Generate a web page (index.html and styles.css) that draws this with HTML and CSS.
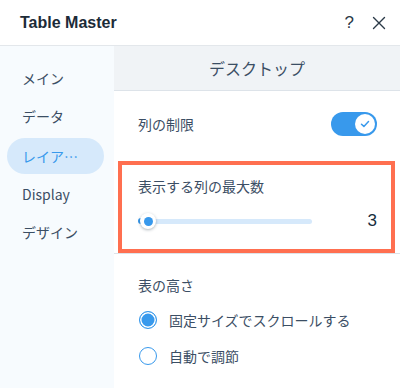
FILE: index.html
```html
<!DOCTYPE html>
<html lang="ja">
<head>
<meta charset="utf-8">
<title>Table Master</title>
<link rel="stylesheet" href="styles.css">
</head>
<body>
<div class="panel">
  <header class="header">
    <div class="title">Table Master</div>
    <div class="header-actions">
      <span class="help">?</span>
      <svg class="close" width="14" height="14" viewBox="0 0 14 14"><path d="M1.5 1.5 L12.5 12.5 M12.5 1.5 L1.5 12.5" stroke="#2b3a48" stroke-width="1.4" fill="none" stroke-linecap="round"/></svg>
    </div>
  </header>
  <div class="main">
    <nav class="sidebar">
      <div class="nav-item">メイン</div>
      <div class="nav-item">データ</div>
      <div class="nav-item active">レイア…</div>
      <div class="nav-item">Display</div>
      <div class="nav-item">デザイン</div>
    </nav>
    <section class="content">
      <div class="subheader">デスクトップ</div>
      <div class="row toggle-row">
        <span class="label">列の制限</span>
        <div class="toggle">
          <div class="knob">
            <svg width="10" height="8" viewBox="0 0 10 8"><path d="M1.5 4.2 L3.9 6.4 L8.5 1.6" stroke="#3899ec" stroke-width="1.5" fill="none" stroke-linecap="round" stroke-linejoin="round"/></svg>
          </div>
        </div>
      </div>
      <div class="highlight">
        <div class="label">表示する列の最大数</div>
        <div class="slider-row">
          <div class="slider">
            <div class="track"></div>
            <div class="fill"></div>
            <div class="thumb"><div class="dot"></div></div>
          </div>
          <span class="value">3</span>
        </div>
      </div>
      <div class="divider"></div>
      <div class="height-section">
        <div class="label">表の高さ</div>
        <div class="radio-row">
          <span class="radio checked"></span>
          <span class="radio-label">固定サイズでスクロールする</span>
        </div>
        <div class="radio-row">
          <span class="radio"></span>
          <span class="radio-label">自動で調節</span>
        </div>
      </div>
    </section>
  </div>
</div>
</body>
</html>
```
FILE: styles.css
```css
* { box-sizing: border-box; }
html, body {
  margin: 0;
  padding: 0;
  background: #ffffff;
}
body {
  font-family: "Noto Sans CJK JP", "Liberation Sans", sans-serif;
  color: #3b4e64;
}
.panel {
  width: 400px;
  height: 388px;
  display: flex;
  flex-direction: column;
  overflow: hidden;
}
.header {
  height: 46px;
  flex: none;
  display: flex;
  align-items: center;
  justify-content: space-between;
  padding: 0 14px 0 20px;
  border-bottom: 1px solid #e3e7eb;
}
.title {
  font-family: "Liberation Sans", Arial, sans-serif;
  font-weight: bold;
  font-size: 16px;
  color: #1c2b38;
  margin-top: 1px;
}
.header-actions {
  display: flex;
  align-items: center;
  gap: 18px;
}
.help {
  font-family: "Liberation Sans", Arial, sans-serif;
  font-size: 17px;
  color: #2b3a48;
  line-height: 1;
}
.close { display: block; }
.main {
  flex: 1;
  display: flex;
}
.sidebar {
  width: 114px;
  flex: none;
  background: #f7fbfe;
  padding-top: 14px;
}
.nav-item {
  height: 36px;
  margin: 0 10px 2px 7px;
  padding-left: 15px;
  display: flex;
  align-items: center;
  font-size: 14px;
  color: #3b4e64;
  white-space: nowrap;
}
.nav-item.active {
  background: #d6e9fb;
  color: #3899ec;
  border-radius: 18px;
  margin-top: 4px;
  margin-bottom: 2px;
}
.content {
  flex: 1;
  display: flex;
  flex-direction: column;
}
.subheader {
  height: 45px;
  flex: none;
  background: #f0f3f6;
  border-bottom: 1px solid #dde3e9;
  display: flex;
  align-items: center;
  justify-content: center;
  font-size: 16px;
  color: #3b4e64;
}
.label {
  font-size: 14px;
  color: #3b4e64;
}
.toggle-row {
  height: 70px;
  display: flex;
  align-items: center;
  justify-content: space-between;
  padding: 0 23px 4px 24px;
}
.toggle {
  width: 46px;
  height: 24px;
  border-radius: 12px;
  background: #3899ec;
  position: relative;
  display: flex;
  align-items: center;
  justify-content: flex-end;
  padding-right: 2px;
}
.knob {
  width: 20px;
  height: 20px;
  border-radius: 50%;
  background: #ffffff;
  display: flex;
  align-items: center;
  justify-content: center;
}
.knob svg { display: block; }
.highlight {
  margin: 0 5px 0 4px;
  height: 92px;
  border: 4px solid #ff6f50;
  padding: 10px 14px 0 16px;
}
.highlight .label {
  line-height: 22px;
}
.slider-row {
  margin-top: 14px;
  display: flex;
  align-items: center;
  justify-content: space-between;
}
.slider {
  position: relative;
  width: 174px;
  height: 18px;
}
.track {
  position: absolute;
  left: 2px;
  right: 0;
  top: 7px;
  height: 5px;
  border-radius: 3px;
  background: #d6e9fb;
}
.fill {
  position: absolute;
  left: 0;
  width: 10px;
  top: 6px;
  height: 6px;
  border-radius: 3px;
  background: #3899ec;
}
.thumb {
  position: absolute;
  left: 2px;
  top: 1px;
  width: 16px;
  height: 16px;
  border-radius: 50%;
  background: #ffffff;
  box-shadow: 0 1px 3px rgba(22, 45, 61, 0.35);
  display: flex;
  align-items: center;
  justify-content: center;
}
.dot {
  width: 9px;
  height: 9px;
  border-radius: 50%;
  background: #3899ec;
}
.value {
  font-family: "Liberation Sans", Arial, sans-serif;
  font-size: 17px;
  color: #162d3d;
  margin-right: 0;
}
.divider {
  height: 1px;
  background: #dde3e9;
}
.height-section {
  padding: 20px 0 0 24px;
}
.height-section .label {
  line-height: 22px;
}
.radio-row {
  display: flex;
  align-items: center;
  gap: 12px;
  height: 22px;
  margin-top: 13px;
  padding-left: 1px;
}
.radio-row + .radio-row {
  margin-top: 14px;
}
.radio {
  width: 18px;
  height: 18px;
  border-radius: 50%;
  border: 1.5px solid #3899ec;
  background: #ffffff;
  display: block;
  flex: none;
}
.radio.checked {
  background: #3899ec;
  box-shadow: inset 0 0 0 1.5px #ffffff;
}
.radio-label {
  font-size: 14px;
  color: #3b4e64;
}
```
